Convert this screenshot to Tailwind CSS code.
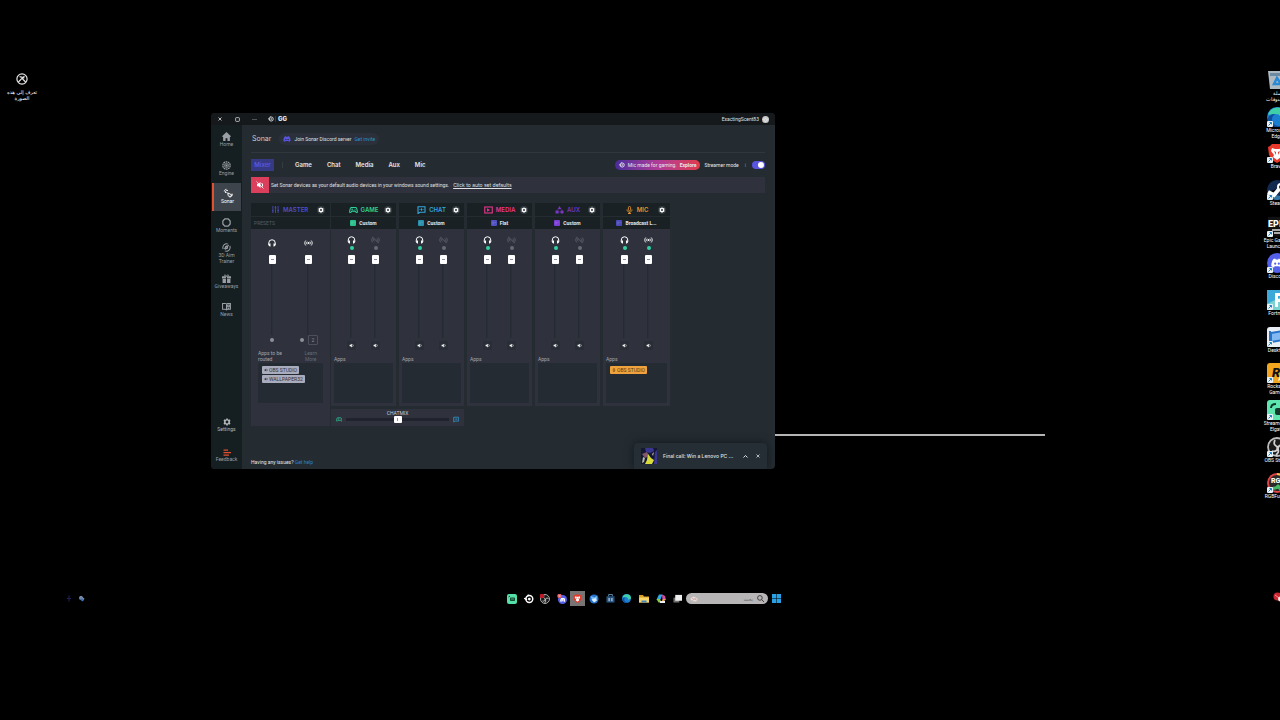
<!DOCTYPE html>
<html lang="en">
<head>
    <meta charset="UTF-8">
    <meta name="viewport" content="width=device-width, initial-scale=1.0">
    <title>Sonar</title>
    <script src="https://cdn.jsdelivr.net/npm/@tailwindcss/browser@4"></script>
</head>
<body class="bg-black text-[#c9ccd1] font-['Roboto',sans-serif] text-[5px] leading-[6px]">
    <!-- shared icons -->
    <svg class="hidden">
        <symbol id="gear" viewBox="0 0 16 16"><path fill="currentColor" fill-rule="evenodd" d="M6.500 1h3l.4 2 1.300.6L13 2.700l2 2.600-1.200 1.600v2.200L15 10.700l-2 2.600-1.800-.9-1.300.6-.4 2h-3l-.4-2-1.300-.6-1.800.9-2-2.600 1.200-1.600V6.900L1 5.300l2-2.600 1.800.9L6.100 3zM8 5.200a2.800 2.800 0 1 0 0 5.600 2.800 2.800 0 0 0 0-5.600z"/></symbol>
        <symbol id="phones" viewBox="0 0 16 16"><path fill="none" stroke="currentColor" stroke-width="2" d="M1.500 12V8a6.500 6.500 0 0 1 13 0v4"/><path fill="currentColor" d="M2.500 9H5v6H3.500L1 13zM13.500 9H11v6h1.500l2.500-2z"/></symbol>
        <symbol id="cast" viewBox="0 0 20 16"><g fill="none" stroke="currentColor" stroke-width="2"><path d="M4 2.500c-3 3.500-3 7.500 0 11M16 2.500c3 3.500 3 7.500 0 11M7 5c-1.500 2-1.500 4 0 6M13 5c1.500 2 1.500 4 0 6"/></g><circle cx="10" cy="8" r="2" fill="currentColor"/></symbol>
        <symbol id="castoff" viewBox="0 0 20 16"><g fill="none" stroke="currentColor" stroke-width="2"><path d="M4 2.500c-3 3.500-3 7.500 0 11M16 2.500c3 3.500 3 7.500 0 11M7 5c-1.500 2-1.500 4 0 6M13 5c1.500 2 1.500 4 0 6M3 1l14 14"/></g></symbol>
        <symbol id="speaker" viewBox="0 0 16 16"><path fill="currentColor" d="M2 5.500h3L9 2v12l-4-3.500H2z"/><path fill="none" stroke="currentColor" stroke-width="2" d="M11 4c3 2 3 6 0 8"/></symbol>
        <symbol id="pad" viewBox="0 0 20 16"><path fill="none" stroke="currentColor" stroke-width="2.400" d="M5 2.500h10c2 0 3 5 3.500 8.500.3 3-2 3.500-3.500 1.500l-1.500-2h-7L5 12.500c-1.500 2-3.800 1.500-3.500-1.500C2 7.500 3 2.500 5 2.500z"/><path fill="none" stroke="currentColor" stroke-width="1.500" d="M7 4.500v4M5 6.500h4M12 6.500h3"/></symbol>
        <symbol id="chat" viewBox="0 0 18 16"><path fill="none" stroke="currentColor" stroke-width="2.200" d="M2 1.500h14v11H6l-4 2.500z"/><path fill="none" stroke="currentColor" stroke-width="1.800" d="M5 7h2M8 7h2M11 7h2M9 4.500v5"/></symbol>
        <symbol id="media" viewBox="0 0 18 16"><rect x="1.500" y="2" width="15" height="12" fill="none" stroke="currentColor" stroke-width="2.200"/><path fill="currentColor" d="M6 4.500L12 8l-6 3.500z"/></symbol>
        <symbol id="aux" viewBox="0 0 18 16"><path fill="currentColor" d="M9 0l4 6.500H5zM1 9h6.500v6H1z"/><circle cx="14" cy="12" r="3.500" fill="currentColor"/><path stroke="currentColor" d="M5 7L3 10M13 7l1 3M7 12h4"/></symbol>
        <symbol id="mic" viewBox="0 0 16 16"><rect x="5.800" y="1" width="4.400" height="8.500" rx="2.200" fill="none" stroke="currentColor" stroke-width="1.800"/><path fill="none" stroke="currentColor" stroke-width="1.800" d="M3 7c0 7 10 7 10 0M8 12v3.500M5 15h6"/></symbol>
        <symbol id="discord" viewBox="0 0 20 16"><path fill="currentColor" fill-rule="evenodd" d="M4 1.500L7 .5l1 1.500h4l1-1.500 3 1c2.500 3.500 3.500 7 3.500 11.500-1.500 1.300-3 2-4.500 2.300L14 13.500H6l-1 1.800C3.500 15 2 14.300.5 13 .5 8.500 1.500 5 4 1.500zM7 7a1.800 2 0 1 0 0 4 1.800 2 0 0 0 0-4zm6 0a1.800 2 0 1 0 0 4 1.800 2 0 0 0 0-4z"/></symbol>
        <symbol id="steel" viewBox="0 0 16 16"><circle cx="8.500" cy="8" r="5.500" fill="none" stroke="currentColor" stroke-width="2.400"/><circle cx="8.500" cy="8" r="2.200" fill="currentColor"/><path stroke="currentColor" stroke-width="2" d="M0 7l5 2M6 1l2 2"/></symbol>
        <symbol id="edge" viewBox="0 0 20 20"><circle cx="10" cy="10" r="10" fill="#1b7fd0"/><path fill="#3fd0a8" d="M1 8C3-2 19-2 20 8c0 4-4 5-7 4 1-3-1-5-4-5-4 0-7 1-8 1z"/><path fill="#0f4f9e" d="M6 9c-3 5 1 11 9 10-5 3-13 0-14-7 0-3 3-5 7-5z"/></symbol>
        <symbol id="brave" viewBox="0 0 20 20"><path fill="#e8392b" d="M5 1h10l2 2 2 1-1 8-3 5-5 3-5-3-3-5-1-8 2-1z"/><path fill="#fff" d="M5 5l3 1h4l3-1 1 3-3 4 1 2-4 3-4-3 1-2-3-4z"/><path fill="#e8392b" d="M7 8l2 1v3zM13 8l-2 1v3z"/></symbol>
        <symbol id="obs" viewBox="0 0 20 20"><circle cx="10" cy="10" r="9" fill="#191919" stroke="#bcbcbc" stroke-width="1.800"/><path fill="none" stroke="#d0d0d0" stroke-width="1.800" d="M8 3c-2 4 0 6 3 7M17 9c-4-2-6 0-6 3M5 14c4 1 6-1 5-4M11 12c1 3 0 4-2 6"/></symbol>
        <symbol id="link" viewBox="0 0 6 6"><rect width="6" height="6" rx="1" fill="#e9f2f7"/><path fill="none" stroke="#2380c0" d="M1.500 4.500l3-3M2.500 1.500h2v2"/></symbol>
    </svg>

    <main class="relative h-screen overflow-hidden">
        <!-- desktop shortcuts -->
        <div class="absolute left-1 top-[73px] w-9 flex flex-col items-center gap-1 text-center text-white font-['DejaVu_Sans',sans-serif]">
            <svg class="size-3" viewBox="0 0 20 20" fill="none" stroke="#e6e6e6" stroke-width="2"><circle cx="10" cy="10" r="8.500"/><path d="M4 15l6-6 6 6M6 6l8 2M14 5l-4 5"/></svg>
            <span dir="rtl" lang="ar">تعرف إلى هذه الصورة</span>
        </div>
        <div id="shortcuts" class="absolute left-[1262px] top-[70px] w-[30px] h-[440px] grid grid-rows-12 text-center text-white"></div>

        <div class="absolute left-[774px] right-[235px] top-[434px] h-0.5 bg-[#b4b4b4]"></div>

        <!-- app window -->
        <section class="absolute left-[211px] top-[113px] w-[564px] h-[356px] flex flex-col rounded-sm overflow-hidden bg-[#242c32]">
            <header class="h-3 shrink-0 flex items-center pl-[7px] pr-1.5 bg-[#15191c] text-[#dfe1e3]">
                <button aria-label="Close" class="w-[17px]"><svg class="size-1" viewBox="0 0 8 8" stroke="currentColor" stroke-width="1.600"><path d="M1 1l6 6M7 1L1 7"/></svg></button>
                <button aria-label="Maximize" class="w-[17px]"><svg class="size-[5px]" viewBox="0 0 8 8" fill="none" stroke="currentColor" stroke-width="1.200"><rect x="1" y="1" width="6" height="6" rx="1"/></svg></button>
                <button aria-label="Minimize" class="w-4"><svg class="size-[5px]" viewBox="0 0 8 8" stroke="#777"><path d="M0 4h8"/></svg></button>
                <svg class="size-1.5"><use href="#steel"/></svg>
                <span class="ml-px pl-0.5 border-l border-[#333a3e] font-['Inter',sans-serif] font-black text-[6px]">GG</span>
                <span class="ml-auto mr-[3px]">ExactingScent83</span>
                <svg class="size-[7px]" viewBox="0 0 14 14"><circle cx="7" cy="7" r="7" fill="#c9c9c9"/><path fill="none" stroke="#eee" stroke-width="1.500" d="M3 8l4-4 4 4-4 3z"/></svg>
            </header>

            <div class="flex grow min-h-0">
                <nav class="w-[31px] shrink-0 flex flex-col bg-[#151e20] text-center text-[#9a9fa5]">
                    <a href="#" class="h-[29px] flex flex-col items-center pt-[7px]"><svg class="size-[9px] shrink-0" viewBox="0 0 16 16" fill="currentColor"><path d="M8 0l8 7.500-1.500 1.300L14 8.500V16H9.700v-5H6.300v5H2V8.500l-.5.300L0 7.500z"/></svg>Home</a>
                    <a href="#" class="h-[29px] flex flex-col items-center pt-[7px]"><svg class="size-[9px] shrink-0" viewBox="0 0 16 16" fill="none" stroke="currentColor"><circle cx="8" cy="8" r="6.500" stroke-width="2.200" stroke-dasharray="3 1"/><circle cx="8" cy="8" r="3.500" stroke-width="1.500"/><circle cx="8" cy="8" r="1.500" fill="currentColor"/></svg>Engine</a>
                    <a href="#" class="h-7 mx-px flex flex-col items-center pt-[5px] bg-[#3e444c] border-l-2 border-[#e0512f] text-white"><svg class="size-[10px] shrink-0" viewBox="0 0 16 16" fill="none" stroke="currentColor" stroke-width="1.500"><path d="M2 5.500c0-2 1.500-3.500 3.500-3.500M4 8C3 5 5 3 8 4M5 6l3 3M8 8l6 3c-1 3-4 3.500-6 1zM14.500 9c1 3-1 5.500-4 5.500"/></svg>Sonar</a>
                    <a href="#" class="h-7 flex flex-col items-center pt-[7px]"><svg class="size-[9px] shrink-0" viewBox="0 0 16 16" fill="none" stroke="currentColor" stroke-width="2.200"><path d="M5 1.500h6l3.500 4v5l-3.500 4H5l-3.500-4v-5z"/></svg>Moments</a>
                    <a href="#" class="h-[31px] flex flex-col items-center pt-1"><svg class="size-[9px] shrink-0" viewBox="0 0 16 16" fill="none" stroke="currentColor" stroke-width="1.800"><path d="M2 11C0 5 5 0 11 2M5 14c6 2 11-3 9-9M4 10l8-6M6 12c-1-4 1-7 5-7"/><circle cx="8" cy="8" r="2"/></svg>3D Aim<br>Trainer</a>
                    <a href="#" class="h-7 flex flex-col items-center pt-1"><svg class="size-[9px] shrink-0" viewBox="0 0 16 16" fill="currentColor"><path d="M0 4h7v4H0zM9 4h7v4H9zM1 9h6v7H1zM9 9h6v7H9z"/><path fill="none" stroke="currentColor" stroke-width="1.500" d="M8 4C2 4 4-1 8 3.500 12-1 14 4 8 4z"/></svg>Giveaways</a>
                    <a href="#" class="h-7 flex flex-col items-center pt-1"><svg class="size-[9px] shrink-0" viewBox="0 0 16 16" fill="none" stroke="currentColor" stroke-width="1.800"><path d="M1 2.500h5l2 1 2-1h5v10.500h-5l-2 1-2-1H1zM8 3v11M10 5.500h3v3h-3zM10 11h3"/></svg>News</a>
                    <a href="#" class="mt-auto h-[31px] flex flex-col items-center text-[#b3b7bb]"><svg class="size-2 shrink-0"><use href="#gear"/></svg>Settings</a>
                    <a href="#" class="h-5 flex flex-col items-center"><svg class="w-2 h-[7px] shrink-0" viewBox="0 0 16 14" fill="none" stroke="#e0512f" stroke-width="2.500"><path d="M1 2h9M1 7h15M1 12h11"/></svg>Feedback</a>
                </nav>

                <div class="grow min-w-0 flex flex-col pl-[9px] pr-2.5 relative">
                    <div class="h-7 shrink-0 flex items-center gap-2 border-b border-[#30383d]">
                        <h1 class="pl-px font-['Inter',sans-serif] text-[7px]">Sonar</h1>
                        <p class="h-3 flex items-center gap-[3px] px-1 rounded-full bg-[#2b303b] text-[#dfe1e3]"><svg class="w-2 h-1.5 text-[#5a55e0]"><use href="#discord"/></svg>Join Sonar Discord server <a href="#" class="text-[#2b93c4]">Get invite</a></p>
                    </div>

                    <div class="h-6 shrink-0 flex items-center font-['Inter',sans-serif] font-semibold text-[6px] text-[#e6e8ea]">
                        <button class="w-[23px] h-3 bg-[#363a84] text-[#5c58dc]">Mixer</button>
                        <span class="ml-2 mr-3 h-1.5 w-px bg-[#343c42]"></span>
                        <div class="flex gap-[15px]">
                            <button>Game</button><button>Chat</button><button>Media</button><button>Aux</button><button>Mic</button>
                        </div>
                        <div class="ml-auto flex items-center font-['Roboto',sans-serif] font-normal text-[5px]">
                            <a href="#" class="h-2.5 px-1 flex items-center gap-[3px] rounded-full bg-linear-to-r from-[#4a2a9c] via-[#b03a98] to-[#e03a48]"><svg class="size-1.5"><use href="#steel"/></svg>Mic made for gaming. <b>Explore</b></a>
                            <label for="streamer" class="ml-1">Streamer mode</label>
                            <span class="mx-1.5 text-[#8a9096]">i</span>
                            <input id="streamer" type="checkbox" checked class="appearance-none w-[13px] h-2 p-px rounded-full bg-[#5a55e0] flex justify-end before:size-1.5 before:rounded-full before:bg-white">
                        </div>
                    </div>

                    <div class="h-4 shrink-0 flex items-center bg-[#2f323d] text-[#dfe1e3]">
                        <span class="w-[18px] h-full flex items-center justify-center bg-[#db3f5c] text-white"><svg class="size-2" viewBox="0 0 16 16"><use href="#speaker"/><path d="M1 1l14 14" stroke="currentColor" stroke-width="1.500"/></svg></span>
                        <span class="ml-0.5">Set Sonar devices as your default audio devices in your windows sound settings.</span>
                        <a href="#" class="ml-1 underline font-['Inter',sans-serif]">Click to auto set defaults</a>
                    </div>

                    <!-- mixer -->
                    <div class="mt-2.5 flex items-start">
                        <div class="w-[79px] shrink-0">
                            <div class="h-[13px] mb-px flex items-center justify-between pl-[21px] pr-[5px] bg-[#192124]">
                                <h2 class="flex items-center gap-1 font-['Inter',sans-serif] font-semibold text-[6px] text-[#514fc4]"><svg class="size-[7px]" viewBox="0 0 16 16" fill="none" stroke="currentColor" stroke-width="1.800"><path d="M2 0v16M8 0v16M14 0v16M0 11h4M6 4h4M12 10h4"/></svg>MASTER</h2>
                                <button aria-label="Master settings" class="size-2 rounded-full bg-[#343c42] text-white flex items-center justify-center"><svg class="size-1.5"><use href="#gear"/></svg></button>
                            </div>
                            <div class="h-3 pl-[3px] flex items-center bg-[#192124] text-[#535b61]">PRESETS</div>
                            <div class="h-[197px] bg-[#2f323d] px-[7px] flex flex-col">
                                <div class="flex gap-7 px-2.5 pt-2.5 text-white">
                                    <div class="flex flex-col items-center w-2"><svg class="size-2"><use href="#phones"/></svg><input type="range" value="100" aria-label="Master volume" class="[writing-mode:vertical-lr] [direction:rtl] appearance-none mt-2 w-[7px] h-20 bg-linear-to-r from-transparent from-35% via-[#252b33] via-35% to-transparent to-65% [&::-webkit-slider-thumb]:appearance-none [&::-webkit-slider-thumb]:w-[7px] [&::-webkit-slider-thumb]:h-[9px] [&::-webkit-slider-thumb]:rounded-[1px] [&::-webkit-slider-thumb]:[background:linear-gradient(#8a90a8,#8a90a8)_center/3px_1px_no-repeat_#fff]"></div>
                                    <div class="flex flex-col items-center w-2"><svg class="w-[9px] h-2"><use href="#cast"/></svg><input type="range" value="100" aria-label="Master stream volume" class="[writing-mode:vertical-lr] [direction:rtl] appearance-none mt-2 w-[7px] h-20 bg-linear-to-r from-transparent from-35% via-[#252b33] via-35% to-transparent to-65% [&::-webkit-slider-thumb]:appearance-none [&::-webkit-slider-thumb]:w-[7px] [&::-webkit-slider-thumb]:h-[9px] [&::-webkit-slider-thumb]:rounded-[1px] [&::-webkit-slider-thumb]:[background:linear-gradient(#8a90a8,#8a90a8)_center/3px_1px_no-repeat_#fff]"></div>
                                </div>
                                <div class="flex items-center h-2.5 pl-3 text-[#8d9097]">
                                    <span class="size-1 rounded-full bg-current"></span>
                                    <span class="ml-[26px] size-1 rounded-full bg-current"></span>
                                    <button class="ml-1 size-2.5 border border-[#4b505a] rounded-[1px] leading-[8px]">2</button>
                                </div>
                                <div class="flex justify-between pt-[5px] pr-1.5 text-[#a4a7ad]"><p>Apps to be<br>routed</p><a href="#" class="text-[#666a73] text-center">Learn<br>More</a></div>
                                <div class="mt-px h-10 w-[65px] bg-[#242b32] px-1 pt-[3px] flex flex-col items-start gap-px text-[#31333e]">
                                    <span class="flex items-center h-2 px-0.5 gap-px rounded-[1px] bg-[#a9acbd]"><svg class="size-1"><use href="#speaker"/></svg>OBS STUDIO</span>
                                    <span class="flex items-center h-2 px-0.5 gap-px rounded-[1px] bg-[#a9acbd]"><svg class="size-1"><use href="#speaker"/></svg>WALLPAPER32</span>
                                </div>
                            </div>
                        </div>
                        <div class="ml-px">
                            <div id="channels" class="flex gap-[3px]"></div>
                            <!-- chatmix -->
                            <div class="mt-[3px] w-[133px] h-[17px] flex items-end gap-1 pb-[3px] px-[5px] bg-[#2f323d]">
                                <svg class="w-2 h-[7px] text-[#2fc495]"><use href="#pad"/></svg>
                                <div class="grow flex flex-col items-center">
                                    <label for="mix" class="leading-[5px]">CHATMIX</label>
                                    <input id="mix" type="range" value="50" class="appearance-none w-full h-[7px] bg-[linear-gradient(transparent_35%,#20222e_35%,#20222e_65%,transparent_65%)] [&::-webkit-slider-thumb]:appearance-none [&::-webkit-slider-thumb]:w-2 [&::-webkit-slider-thumb]:h-[7px] [&::-webkit-slider-thumb]:rounded-[1px] [&::-webkit-slider-thumb]:[background:linear-gradient(#8a90a8,#8a90a8)_center/1px_3px_no-repeat_#fff]">
                                </div>
                                <svg class="w-2 h-[7px] text-[#3499d0]"><use href="#chat"/></svg>
                            </div>
                        </div>
                    </div>

                    <p class="mt-auto mb-1 text-[#e6e8ea]">Having any issues? <a href="#" class="text-[#2b84c0]">Get help</a></p>

                    <div class="absolute right-2 bottom-0 w-[133px] h-[26px] flex items-center px-[7px] bg-[#262e35] rounded-t-sm shadow-[0_0_10px_#12181c] text-[#dfe1e3]">
                        <svg class="size-4" viewBox="0 0 16 16"><path fill="#141833" d="M0 0h16v16H0z"/><path fill="#3a3690" d="M4 0h8l1 3-4 2-4-1zM14 4l2-2v14h-3z"/><path fill="#80586a" d="M1 6l5-2 2 4-4 2z"/><path fill="#d8db3a" d="M7 6l3 4 3 2-2 4H4l2-4z"/><path fill="#b8b9a2" d="M2 9l2 1-1 4-2 1zM11 6l2-2-1 4z"/></svg>
                        <span class="ml-1.5 font-['Inter',sans-serif] font-medium whitespace-nowrap">Final call: Win a Lenovo PC ...</span>
                        <button aria-label="Expand" class="ml-auto"><svg class="size-[5px]" viewBox="0 0 10 10" fill="none" stroke="currentColor" stroke-width="2"><path d="M1 7l4-4 4 4"/></svg></button>
                        <button aria-label="Dismiss" class="ml-2"><svg class="size-1" viewBox="0 0 8 8" stroke="currentColor" stroke-width="1.500"><path d="M1 1l6 6M7 1L1 7"/></svg></button>
                    </div>
                </div>
            </div>
        </section>

        <!-- taskbar -->
        <footer class="absolute inset-x-0 top-[591px] h-[15px]">
            <div class="absolute left-[66px] top-1 flex gap-[5px]">
                <svg class="size-[7px]" viewBox="0 0 14 14" fill="none" stroke="#20205e" stroke-width="2"><path d="M6 1v12M2 7h8"/></svg>
                <svg class="size-[7px]" viewBox="0 0 14 14"><path fill="#778ca8" d="M2 6c0-5 7-5 8-1l3 2-2 4-8-2z"/><path fill="#3a70b8" d="M5 7l6 1-1 5-4-2z"/></svg>
            </div>
            <div class="absolute left-[504px] top-0 h-full flex items-center">
                <button aria-label="Stream Deck" class="w-4 flex justify-center"><svg class="size-2.5" viewBox="0 0 20 20"><rect width="20" height="20" rx="4" fill="#55e0a6"/><rect x="6" y="7" width="10" height="7" rx="1.500" fill="#164a38"/><path stroke="#164a38" stroke-width="2" d="M3 6l3-2"/><path stroke="#7ef0c0" d="M8 10h6"/></svg></button>
                <button aria-label="SteelSeries" class="w-[17px] flex justify-center"><svg class="size-2.5 text-white"><use href="#steel"/></svg></button>
                <button aria-label="OBS" class="w-4 flex justify-center"><svg class="size-2.5" viewBox="0 0 20 20"><use href="#obs"/><circle cx="4" cy="4" r="4.500" fill="#c11a26"/></svg></button>
                <button aria-label="Discord" class="w-[17px] flex justify-center"><svg class="size-2.5" viewBox="0 0 20 20"><circle cx="11" cy="11" r="9" fill="#5560e8"/><svg x="6" y="7" width="11" height="9" color="#fff"><use href="#discord"/></svg><circle cx="5" cy="4" r="4.500" fill="#e35b62"/><path stroke="#fff" stroke-width="1.500" d="M3 4h4"/></svg></button>
                <button aria-label="Brave" class="w-[15px] h-[15px] flex items-center justify-center bg-[#777473]"><svg class="size-[9px]"><use href="#brave"/></svg></button>
                <button aria-label="Thunderbird" class="w-[18px] flex justify-center"><svg class="size-2.5" viewBox="0 0 20 20"><circle cx="10" cy="10" r="9" fill="#2573cf"/><path fill="#79baf1" d="M3 4l8 3 6-4-2 9-8 1z"/><path fill="#dcecf9" d="M5 11l8-3 3 5-6 4z"/></svg></button>
                <button aria-label="Store" class="w-[15px] flex justify-center"><svg class="size-[9px]" viewBox="0 0 20 20"><path fill="#25517d" d="M1 5h18v14H1z"/><path fill="none" stroke="#6799c2" stroke-width="2" d="M6 5V1h8v4"/><path fill="#8aa9c5" d="M5 9h4v7H5zM11 9h4v7h-4z"/></svg></button>
                <button aria-label="Edge" class="w-[17px] flex justify-center"><svg class="size-[9px]"><use href="#edge"/></svg></button>
                <button aria-label="Files" class="w-[17px] flex justify-center"><svg class="w-2.5 h-2" viewBox="0 0 20 16"><path fill="#d99d26" d="M0 0h8l2 3h10v12H0z"/><path fill="#f7d468" d="M0 5h20v10H0z"/><path fill="#4187c4" d="M5 11h10v4H5z"/></svg></button>
                <button aria-label="Copilot" class="w-[17px] flex justify-center"><svg class="size-2.5" viewBox="0 0 20 20"><path fill="#2da8e5" d="M6 1h7l-4 10H1z"/><path fill="#d14fa8" d="M12 1l6 3 2 8h-7z"/><path fill="#8bc849" d="M1 10h7l3 7H5z"/><path fill="#eea54a" d="M10 17l4-7h5l-4 7z"/><path fill="#eee" d="M8 14h10v4H8z"/></svg></button>
                <button aria-label="Task view" class="w-[17px] flex justify-center"><svg class="size-[9px]" viewBox="0 0 20 20"><rect x="1" y="8" width="13" height="11" fill="#6f6f6f"/><rect x="5" y="2" width="15" height="13" fill="#eee"/></svg></button>
                <label class="w-[82px] h-[11px] flex items-center px-1 rounded-full bg-[#b7b5b5] text-[#666]">
                    <svg class="w-3 h-2" viewBox="0 0 24 16"><path fill="#e6dedb" d="M2 5l8-4 8 3 4 6-5 5-9-1-6-4z"/><path fill="none" stroke="#bb8178" stroke-width="1.500" d="M5 5l6 4 7-5M11 9l-4 4M13 8l6 3"/></svg>
                    <input type="text" dir="rtl" aria-label="Search" placeholder="بحث" class="grow min-w-0 mx-1 outline-none placeholder:text-[#666] font-['DejaVu_Sans',sans-serif]">
                    <svg class="size-[7px] shrink-0" viewBox="0 0 12 12" fill="none" stroke="#303030" stroke-width="1.500"><circle cx="5" cy="5" r="4"/><path d="M8 8l4 4"/></svg>
                </label>
                <button aria-label="Start" class="w-[17px] flex justify-center"><svg class="size-[9px]" viewBox="0 0 18 18" fill="#2aa0e4"><path d="M0 0h8.500v8.500H0zM9.500 0H18v8.500H9.500zM0 9.500h8.500V18H0zM9.500 9.500H18V18H9.500z"/></svg></button>
            </div>
            <svg class="absolute left-[1273px] top-px size-2.5" viewBox="0 0 20 20"><circle cx="9" cy="9" r="8" fill="#cb2730"/><path stroke="#ee969b" stroke-width="2" d="M4 6l8 6"/><circle cx="15" cy="14" r="5" fill="#eee"/></svg>
        </footer>
    </main>

    <script>
        const channels = [
            { name: "GAME", icon: "pad", color: "#2fd29a", chip: "#2bbf8c", preset: "Custom" },
            { name: "CHAT", icon: "chat", color: "#35a6dc", chip: "#2b8fae", preset: "Custom" },
            { name: "MEDIA", icon: "media", color: "#e6368c", chip: "#5150c0", preset: "Flat" },
            { name: "AUX", icon: "aux", color: "#7636bd", chip: "#7b3fd6", preset: "Custom" },
            { name: "MIC", icon: "mic", color: "#e8942c", chip: "#4b4bb8", preset: "Broadcast L...", live: true, app: "OBS STUDIO" },
        ];

        const fader = (icon, on, label) => `
            <div class="w-2 flex flex-col items-center ${on ? "text-white" : "text-[#5d616b]"}">
                <svg class="w-[9px] h-2"><use href="#${icon}"/></svg>
                <span class="mt-0.5 size-1 rounded-full ${on ? "bg-[#2fd2a0]" : "bg-[#666a73]"}"></span>
                <input type="range" value="100" aria-label="${label}" class="[writing-mode:vertical-lr] [direction:rtl] appearance-none mt-[5px] w-[7px] h-[83px] bg-linear-to-r from-transparent from-35% via-[#252b33] via-35% to-transparent to-65% [&::-webkit-slider-thumb]:appearance-none [&::-webkit-slider-thumb]:w-[7px] [&::-webkit-slider-thumb]:h-[9px] [&::-webkit-slider-thumb]:rounded-[1px] [&::-webkit-slider-thumb]:[background:linear-gradient(#8a90a8,#8a90a8)_center/3px_1px_no-repeat_#fff]">
                <button aria-label="Mute ${label}" class="mt-[3px] size-[9px] shrink-0 flex items-center justify-center bg-[#292d36] text-white"><svg class="size-[5px]"><use href="#speaker"/></svg></button>
            </div>`;

        document.getElementById("channels").innerHTML = channels.map(c => `
            <div class="${c.live ? "w-[67px]" : "w-[65px]"}">
                <div class="h-[13px] mb-px pl-3 pr-1 flex items-center bg-[#192124]">
                    <h2 class="grow flex items-center justify-center gap-[3px] font-['Inter',sans-serif] font-semibold text-[6px]" style="color:${c.color}"><svg class="w-[9px] h-2"><use href="#${c.icon}"/></svg>${c.name}</h2>
                    <button aria-label="${c.name} settings" class="size-2 rounded-full bg-[#343c42] text-white flex items-center justify-center"><svg class="size-1.5"><use href="#gear"/></svg></button>
                </div>
                <div class="h-3 flex items-center justify-center gap-[3px] bg-[#192124] text-[#e6e8ea] font-bold">
                    <svg class="size-1.5" viewBox="0 0 12 12"><rect width="12" height="12" rx="2" fill="${c.chip}"/><path d="M4 3v6M7 5h2" stroke="#fff" stroke-opacity=".4"/></svg>${c.preset}
                </div>
                <div class="h-[177px] px-[3px] bg-[#2f323d]">
                    <div class="flex justify-center gap-4 pt-[7px]">
                        ${fader("phones", true, c.name + " volume")}
                        ${fader(c.live ? "cast" : "castoff", c.live, c.name + " stream volume")}
                    </div>
                    <p class="mt-1.5 text-[#a4a7ad]">Apps</p>
                    <div class="mt-px h-10 px-1 pt-[3px] flex items-start bg-[#242b32]">
                        ${c.app ? `<span class="flex items-center h-2 px-0.5 gap-px rounded-[1px] bg-[#f0a23c] text-[#5e3a0c]"><svg class="size-1"><use href="#mic"/></svg>${c.app}</span>` : ""}
                    </div>
                </div>
            </div>`).join("");

        const shortcuts = [
            ["سلة المحذوفات", `<path fill="#aebac2" d="M1 1h18l-2 18H3z"/><path fill="#6d8ba0" d="M3 3h14v3H3z"/><path fill="none" stroke="#2989d2" stroke-width="2.500" d="M7 14l3-6 4 6z"/>`],
            ["Microsoft Edge", `<use href="#edge"/>`],
            ["Brave", `<use href="#brave"/>`],
            ["Steam", `<circle cx="10" cy="10" r="10" fill="#122a50"/><path fill="#3475a5" d="M1 13l12 3 3 2c-5 4-13 2-15-5z"/><path stroke="#fff" stroke-width="4" d="M1 12l6 3 6-7"/><circle cx="14" cy="7" r="3" fill="#122a50" stroke="#fff" stroke-width="2"/>`],
            ["Epic Games Launcher", `<path fill="#111" d="M1 0h18v17l-9 3-9-3z"/><text x="1" y="10" fill="#fff" font-size="9" font-weight="900">EPIC</text><path stroke="#ddd" stroke-width="1.500" d="M5 13h10M7 16h6"/>`],
            ["Discord", `<circle cx="10" cy="10" r="10" fill="#5560e8"/><svg x="4" y="5" width="12" height="10" color="#fff"><use href="#discord"/></svg>`],
            ["Fortnite", `<path fill="#3ca9d8" d="M0 0h20v20H0z"/><path fill="#7ad2d1" d="M0 14L20 4v16H0z"/><path fill="#fff" d="M8 3h7v3h-4v3h3v3h-3v5H8z"/>`],
            ["Desktop", `<rect width="20" height="20" rx="3" fill="#e8eef5"/><path fill="#83b9f2" stroke="#2873ca" stroke-width="2" d="M4 6l12-2v9l-12 2z"/><path stroke="#2873ca" stroke-width="2" d="M3 4v13"/>`],
            ["Rockstar Games", `<rect width="20" height="20" rx="3" fill="#f2a51e"/><text x="5" y="14" fill="#111" font-size="13" font-weight="900" font-style="italic">R</text><path fill="#fff" d="M14 10l1 3h3l-2 2 1 3-3-2-3 2 1-3z"/>`],
            ["Streamdeck Elgato", `<rect width="20" height="20" rx="3" fill="#5fe5b0"/><rect x="8" y="8" width="12" height="7" rx="2" fill="#12382c"/><path fill="none" stroke="#12382c" stroke-width="2" d="M4 8c0-3 2-4 5-4"/>`],
            ["OBS Studio", `<use href="#obs"/>`],
            ["RGBFusion", `<circle cx="10" cy="10" r="9" fill="#2a2a2a" stroke="#e04444" stroke-width="2"/><path fill="none" stroke="#e8cc42" stroke-width="2" d="M10 1a9 9 0 0 1 9 9"/><path fill="none" stroke="#45b865" stroke-width="3" d="M4 16l12-3M10 12l5 6"/><text x="4" y="10" fill="#fff" font-size="7" font-weight="900">RGB</text>`],
        ];
        document.getElementById("shortcuts").innerHTML = shortcuts.map(([name, art], i) => `
            <a href="#" class="relative flex flex-col items-center">
                <svg class="size-5 shrink-0" viewBox="0 0 20 20">${art}${i ? `<svg y="14" width="6" height="6"><use href="#link"/></svg>` : ""}</svg>
                <span>${name}</span>
            </a>`).join("");
    </script>
</body>
</html>
